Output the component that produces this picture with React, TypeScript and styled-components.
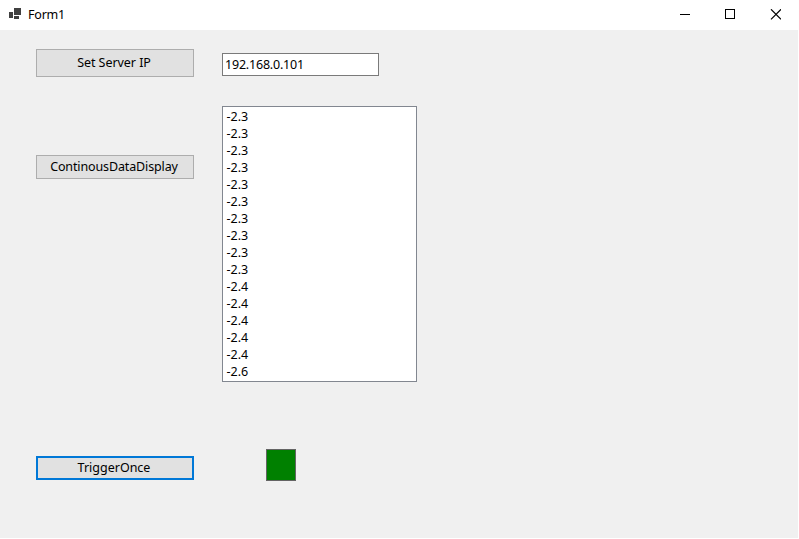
import React from "react";
import styled, { createGlobalStyle } from "styled-components";

const GlobalStyle = createGlobalStyle`
  * { box-sizing: border-box; }
  body { margin: 0; background: #fff; overflow: hidden; }
`;

const Window = styled.div`
  width: 798px;
  height: 538px;
  display: flex;
  flex-direction: column;
  background: #f0f0f0;
  color: #000;
  font-family: "Noto Sans", "Open Sans", sans-serif;
  font-size: 12.5px;
`;

const TitleBar = styled.header`
  height: 30px;
  flex: none;
  display: flex;
  align-items: center;
  padding-left: 8px;
  background: #fff;
`;

const Title = styled.span`
  flex: 1;
  margin-left: 6px;
  font-size: 12.5px;
  letter-spacing: -0.2px;
  line-height: 30px;
`;

const CaptionButton = styled.button`
  width: 45px;
  height: 30px;
  padding: 0 0 2px;
  border: 0;
  background: transparent;
  display: flex;
  align-items: center;
  justify-content: center;
`;

const Form = styled.main`
  flex: 1;
  display: grid;
  grid-template-columns: 158px 195px;
  grid-template-rows: 57px 343px 32px;
  column-gap: 28px;
  padding: 19px 0 0 36px;
`;

const PushButton = styled.button<{ $height: number; $top?: number; $spacing?: number; $focused?: boolean }>`
  width: 158px;
  height: ${(p) => p.$height}px;
  margin: ${(p) => p.$top ?? 0}px 0 0;
  padding: 0 2px 0 0;
  border: ${(p) => (p.$focused ? "2px solid #0078d7" : "1px solid #adadad")};
  background: #e1e1e1;
  color: #000;
  font: inherit;
  letter-spacing: ${(p) => p.$spacing ?? 0}px;
  line-height: 18px;
`;

const AddressInput = styled.input`
  width: 157px;
  height: 23px;
  margin: 4px 0 0;
  padding: 0 2px;
  border: 1px solid #7a7a7a;
  border-radius: 0;
  outline: 0;
  background: #fff;
  color: #000;
  font: inherit;
  letter-spacing: -0.2px;
`;

const ReadingList = styled.ul`
  width: 195px;
  height: 276px;
  margin: 0;
  padding: 1px 3.5px;
  border: 1px solid #828790;
  background: #fff;
  list-style: none;
`;

const Reading = styled.li`
  height: 17px;
  line-height: 17px;
`;

const StatusLamp = styled.div`
  width: 30px;
  height: 32px;
  margin-left: 44px;
  border: 1px solid #646464;
  background: #008000;
`;

const readings = [
  "-2.3", "-2.3", "-2.3", "-2.3", "-2.3", "-2.3", "-2.3", "-2.3",
  "-2.3", "-2.3", "-2.4", "-2.4", "-2.4", "-2.4", "-2.4", "-2.6",
];

const AppIcon = () => (
  <svg width="14" height="14" viewBox="0 0 14 14" fill="#404040" shapeRendering="crispEdges">
    <rect x="6" y="0" width="7" height="7" />
    <rect x="1" y="4" width="4" height="6" />
    <rect x="6" y="8" width="5" height="3" />
  </svg>
);

export default function App() {
  return (
    <>
      <GlobalStyle />
      <Window>
        <TitleBar>
          <AppIcon />
          <Title>Form1</Title>
          <CaptionButton aria-label="Minimize">
            <svg width="11" height="11" viewBox="0 0 11 11" shapeRendering="crispEdges">
              <rect y="5" width="10" height="1" />
            </svg>
          </CaptionButton>
          <CaptionButton aria-label="Maximize">
            <svg width="11" height="11" viewBox="0 0 11 11" shapeRendering="crispEdges">
              <rect x="0.5" y="0.5" width="9" height="9" fill="none" stroke="#000" />
            </svg>
          </CaptionButton>
          <CaptionButton aria-label="Close">
            <svg width="11" height="11" viewBox="0 0 11 11">
              <path d="M1 0.3 11 10.3M11 0.3 1 10.3" stroke="#000" strokeWidth="1.2" />
            </svg>
          </CaptionButton>
        </TitleBar>
        <Form>
          <PushButton $height={28} $spacing={-0.05}>Set Server IP</PushButton>
          <AddressInput defaultValue="192.168.0.101" />
          <PushButton $height={24} $top={49} $spacing={-0.13}>ContinousDataDisplay</PushButton>
          <ReadingList>
            {readings.map((value, i) => (
              <Reading key={i}>{value}</Reading>
            ))}
          </ReadingList>
          <PushButton $height={24} $top={7} $focused>TriggerOnce</PushButton>
          <StatusLamp />
        </Form>
      </Window>
    </>
  );
}
